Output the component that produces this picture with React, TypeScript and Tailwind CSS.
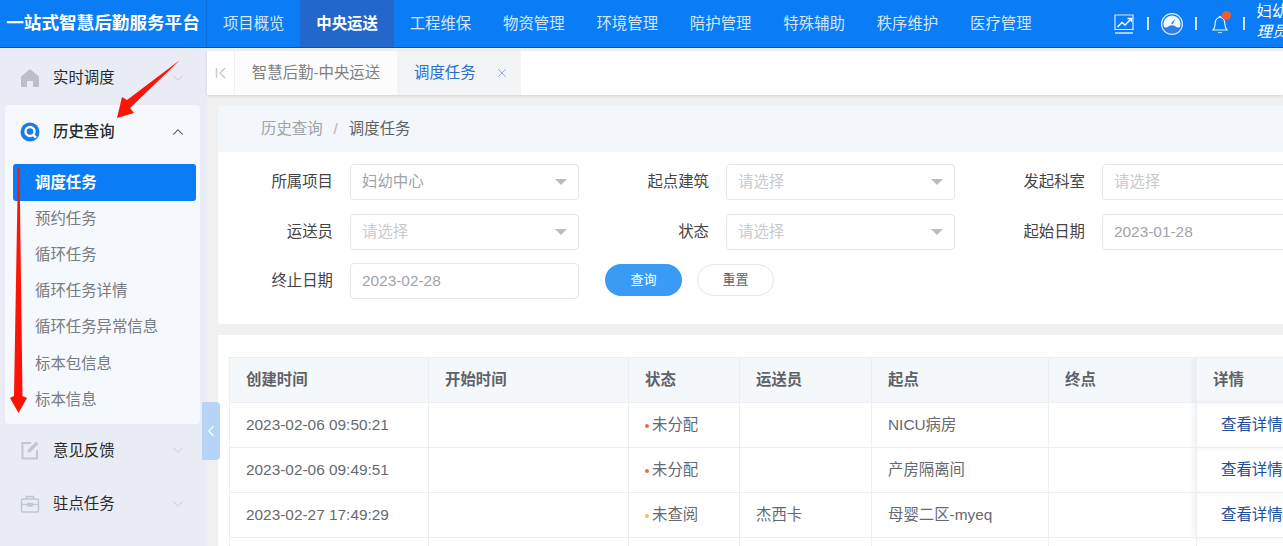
import React from "react";
import { ChevronDown, ChevronUp, ChevronLeft, X } from "lucide-react";

const nav = ["项目概览", "中央运送", "工程维保", "物资管理", "环境管理", "陪护管理", "特殊辅助", "秩序维护", "医疗管理"];
const subs = ["调度任务", "预约任务", "循环任务", "循环任务详情", "循环任务异常信息", "标本包信息", "标本信息"];
const cols = [199, 200, 111, 132, 177, 148, 100];
const rows = [
  ["2023-02-06 09:50:21", "", "未分配", "bg-[#ee6a4d]", "", "NICU病房"],
  ["2023-02-06 09:49:51", "", "未分配", "bg-[#ee6a4d]", "", "产房隔离间"],
  ["2023-02-27 17:49:29", "", "未查阅", "bg-[#e8c84f]", "杰西卡", "母婴二区-myeq"],
];

function Field({ label, value, select, placeholder, labelW }: { label: string; value: string; select?: boolean; placeholder?: boolean; labelW: string }) {
  return (
    <div className="flex items-center shrink-0">
      <div className={`${labelW} shrink-0 text-right text-[15.4px] text-[#444444]`}>{label}</div>
      <div className="ml-[17px] flex h-[36px] w-[229px] shrink-0 items-center justify-between rounded-[4px] border border-[#e4e6ea] bg-white pl-[11px] pr-[11px]">
        <span className={`text-[15.4px] ${placeholder ? "text-[#c8cacf]" : "text-[#a0a3aa]"}`}>{value}</span>
        {select && <span className="h-0 w-0 border-x-[6px] border-t-[6px] border-x-transparent border-t-[#bbbdc2]" />}
      </div>
    </div>
  );
}

function MenuRow({ icon, label, open, className = "" }: { icon: React.ReactNode; label: string; open?: boolean; className?: string }) {
  return (
    <div className={`flex items-center ${className}`}>
      <span className="flex h-[20px] w-[20px] items-center justify-center">{icon}</span>
      <span className={`ml-[13px] flex-1 text-[15.4px] text-[#2a2a2a] ${open ? "font-medium" : ""}`}>{label}</span>
      {open ? <ChevronUp size={18} strokeWidth={1.4} className="text-[#444]" /> : <ChevronDown size={18} strokeWidth={1.2} className="text-[#c3c6cf]" />}
    </div>
  );
}

export default function App() {
  return (
    <div className="relative flex h-[546px] w-[1283px] flex-col overflow-hidden bg-[#f0f0f0] font-['Liberation_Sans','Noto_Sans_CJK_SC',sans-serif]">
      <header className="flex h-[48px] shrink-0 border-b border-[#3d4a5c] bg-[#0a7cf6] text-white">
        <div className="flex w-[207px] shrink-0 items-center justify-center border-r border-[#0a6fdc] text-[17.6px] font-bold whitespace-nowrap">一站式智慧后勤服务平台</div>
        <nav className="flex">
          {nav.map((n, i) => (
            <div key={n} className={`flex w-[93.4px] items-center justify-center text-[15.4px] ${i === 1 ? "bg-[#2367ca] font-bold text-white" : "text-[#d5e6fb]"}`}>{n}</div>
          ))}
        </nav>
        <div className="ml-[66px] flex items-center">
          <svg width="20" height="20" viewBox="0 0 20 20" fill="none" stroke="#d9e9fd" strokeWidth="1.2">
            <path d="M1 15.500V1h18v14.500z" />
            <path d="M1 19h18" strokeWidth="1.500" />
            <path d="M3.500 13l4.500-4.500 3 2.500 6-6M13.500 4.500H17.500V8" stroke="#fff" strokeWidth="1.400" />
          </svg>
          <span className="ml-[13px] h-[13px] w-[2px] bg-[#cfe3fb]" />
          <svg className="ml-[12px]" width="22" height="22" viewBox="0 0 22 22">
            <circle cx="11" cy="11" r="10.400" fill="none" stroke="#d9e9fd" strokeWidth="1.200" />
            <circle cx="11" cy="11" r="8.600" fill="#f1f7fe" />
            <path d="M2.800 14c3 1.600 5.400-1.800 8.200-1.800s5.200 3.400 8.200 1.800A8.600 8.600 0 0 1 2.800 14z" fill="#2a80e8" />
            <path d="M10.200 10.300l4.300-5-2.700 6z" fill="#2a80e8" />
          </svg>
          <span className="ml-[12px] h-[13px] w-[2px] bg-[#cfe3fb]" />
          <div className="relative ml-[15px] h-[20px] w-[16px]">
            <svg width="16" height="20" viewBox="0 0 16 20" fill="none" stroke="#e6f0fe" strokeWidth="1.200">
              <path d="M1 16c1.700-1.700 2-3.500 2.200-6.500C3.400 5.700 5.400 3.500 8 3.500s4.600 2.200 4.800 6c.2 3 .5 4.800 2.200 6.500z" />
              <path d="M6.300 18c.8 1 2.600 1 3.400 0" />
              <path d="M7 3.200c0-1.300 2-1.300 2 0" />
            </svg>
            <span className="absolute left-[10px] top-[-3px] h-[9px] w-[9px] rounded-full bg-[#fa5a2a]" />
          </div>
          <span className="ml-[15px] h-[13px] w-[2px] bg-[#cfe3fb]" />
          <div className="ml-[12px] -mt-[3px] w-[40px] overflow-hidden whitespace-nowrap text-[15.4px] leading-[20px] text-white">
            <div>妇幼中心管</div>
            <div className="italic">理员</div>
          </div>
        </div>
      </header>

      <div className="flex min-h-0 flex-1">
        <aside className="relative flex w-[207px] shrink-0 flex-col bg-[#e9ecf4]">
          <MenuRow className="mt-[2px] h-[55px] pl-[20px] pr-[20px]" label="实时调度" icon={
            <svg width="20" height="20" viewBox="0 0 20 20" fill="#bcbfc8"><path d="M10 1l9 7.500V18a1 1 0 0 1-1 1h-5v-6H7v6H2a1 1 0 0 1-1-1V8.500z" /></svg>
          } />
          <div className="ml-[5px] mr-[7px] rounded-[4px] bg-[#f5f8fc] pb-[6px]">
            <MenuRow className="h-[54px] pl-[15px] pr-[13px]" open label="历史查询" icon={
              <svg width="20" height="20" viewBox="0 0 20 20"><circle cx="10" cy="10" r="9.500" fill="#1a7be6" /><circle cx="10" cy="9.500" r="4.500" fill="none" stroke="#fff" strokeWidth="2.400" /><path d="M12.500 12.500l3.500 3" stroke="#fff" strokeWidth="2.400" /></svg>
            } />
            <div className="ml-[8px] mr-[4px] mt-[5px] flex h-[37px] items-center rounded-[3px] bg-[#0a7cf6] pl-[22px] text-[15.4px] font-bold text-white">调度任务</div>
            <div className="-mt-[1px]">
              {subs.slice(1).map((s) => (
                <div key={s} className="flex h-[36.300px] items-center pl-[30px] text-[15.4px] text-[#787b82]">{s}</div>
              ))}
            </div>
          </div>
          <MenuRow className="h-[53px] pl-[20px] pr-[20px]" label="意见反馈" icon={
            <svg width="20" height="20" viewBox="0 0 20 20" fill="none" stroke="#c3c6d0" strokeWidth="2"><path d="M11 3H2.500v15.500H17V10" /><path d="M7.500 12.500l.6-3L16 1.500l2.500 2.500-8 8z" fill="#c3c6d0" stroke="none" /></svg>
          } />
          <MenuRow className="h-[54px] pl-[20px] pr-[20px]" label="驻点任务" icon={
            <svg width="20" height="20" viewBox="0 0 20 20" fill="none" stroke="#c3c6d0" strokeWidth="1.500"><rect x="1.500" y="5" width="17" height="13" rx="1.500" /><path d="M6.500 5V2.500h7V5M1.500 10.500h17" /><rect x="8" y="9.500" width="4" height="2.500" fill="#c3c6d0" /></svg>
          } />
        </aside>

        <main className="relative min-w-0 flex-1">
          <div className="mt-[3px] flex h-[44px] items-stretch bg-white shadow-[0_1px_3px_rgba(0,0,0,0.12)]">
            <div className="flex w-[28px] items-center justify-center border-r border-[#f0f0f0]">
              <svg width="12" height="12" viewBox="0 0 12 12" fill="none" stroke="#c8cacf" strokeWidth="1.500"><path d="M1.500 1v10M10 1L5 6l5 5" /></svg>
            </div>
            <div className="flex w-[162px] items-center justify-center bg-[#fcfcfc] text-[15.4px] text-[#808080]">智慧后勤-中央运送</div>
            <div className="flex w-[124px] items-center bg-[#f3f4f6] pl-[17px] text-[15.4px] text-[#2a6fcb]">
              调度任务
              <X size={14} strokeWidth={1.300} className="ml-[19px] text-[#6d9bdb]" />
            </div>
          </div>

          <section className="ml-[11px] mt-[11px] h-[218px] w-[1100px] rounded-[3px] bg-white">
            <div className="flex h-[46px] items-center rounded-t-[3px] bg-[#f3f6fa] pl-[43px] text-[15.4px]">
              <span className="text-[#a0a3a8]">历史查询</span>
              <span className="mx-[11px] text-[#b0b3b8]">/</span>
              <span className="text-[#606266]">调度任务</span>
            </div>
            <div className="flex flex-col pt-[12px]">
              <div className="flex h-[36px] items-center">
                <Field labelW="w-[115px]" label="所属项目" value="妇幼中心" select />
                <div className="ml-[46px]"><Field labelW="w-[84px]" label="起点建筑" value="请选择" select placeholder /></div>
                <div className="ml-[46px]"><Field labelW="w-[84px]" label="发起科室" value="请选择" select placeholder /></div>
              </div>
              <div className="mt-[14px] flex h-[36px] items-center">
                <Field labelW="w-[115px]" label="运送员" value="请选择" select placeholder />
                <div className="ml-[46px]"><Field labelW="w-[84px]" label="状态" value="请选择" select placeholder /></div>
                <div className="ml-[46px]"><Field labelW="w-[84px]" label="起始日期" value="2023-01-28" /></div>
              </div>
              <div className="mt-[13px] flex h-[36px] items-start">
                <Field labelW="w-[115px]" label="终止日期" value="2023-02-28" />
                <button className="ml-[26px] mt-[1px] h-[32px] w-[77px] rounded-full bg-[#3a9bf4] text-[13px] text-white">查询</button>
                <button className="ml-[15px] mt-[1px] h-[32px] w-[77px] rounded-full border border-[#e4e6ea] bg-white text-[13px] text-[#606266]">重置</button>
              </div>
            </div>
          </section>

          <section className="ml-[11px] mt-[11px] w-[1100px] bg-white pl-[11px] pt-[22px]">
            <table className="table-fixed border-collapse text-[15.4px] text-[#666a70]">
              <colgroup>
                {cols.map((w, i) => <col key={i} style={{ width: w }} />)}
              </colgroup>
              <thead>
                <tr className="h-[45px] bg-[#f5f8fb] text-left">
                  {["创建时间", "开始时间", "状态", "运送员", "起点", "终点", "详情"].map((h, i) => (
                    <th key={h} className={`border border-[#ebeef2] pl-[16px] font-bold text-[#5f6368] ${i === 6 ? "shadow-[-4px_0_6px_rgba(0,0,0,0.06)]" : ""}`}>{h}</th>
                  ))}
                </tr>
              </thead>
              <tbody>
                {rows.map((r) => (
                  <tr key={r[0]} className="h-[45px]">
                    <td className="border border-[#ebeef2] pl-[16px]">{r[0]}</td>
                    <td className="border border-[#ebeef2]" />
                    <td className="border border-[#ebeef2] pl-[16px]">
                      <span className={`mr-[3px] inline-block h-[4px] w-[4px] rounded-full align-middle ${r[3]}`} />{r[2]}
                    </td>
                    <td className="border border-[#ebeef2] pl-[16px]">{r[4]}</td>
                    <td className="border border-[#ebeef2] pl-[16px]">{r[5]}</td>
                    <td className="border border-[#ebeef2]" />
                    <td className="border border-[#ebeef2] pl-[24px] text-[#1c4f9c] shadow-[-4px_0_6px_rgba(0,0,0,0.06)] whitespace-nowrap">查看详情</td>
                  </tr>
                ))}
                <tr className="h-[45px]">
                  {cols.map((_, i) => <td key={i} className="border border-[#ebeef2]" />)}
                </tr>
              </tbody>
            </table>
          </section>
        </main>

        <div className="absolute left-[202px] top-[402px] flex h-[58px] w-[18px] items-center justify-center rounded-r-[4px] bg-[#b5d4f6] text-white">
          <ChevronLeft size={20} strokeWidth={1.500} />
        </div>
      </div>

      <svg className="pointer-events-none absolute left-0 top-0" width="207" height="425" viewBox="0 0 207 425" fill="#fb1407">
        <path d="M180 60L127 100L122 97L117 118L134 113L130 108z" />
        <path d="M18 167H19.500L22.500 396L27 398L18.500 413L10 398L14 396z" />
      </svg>
    </div>
  );
}
